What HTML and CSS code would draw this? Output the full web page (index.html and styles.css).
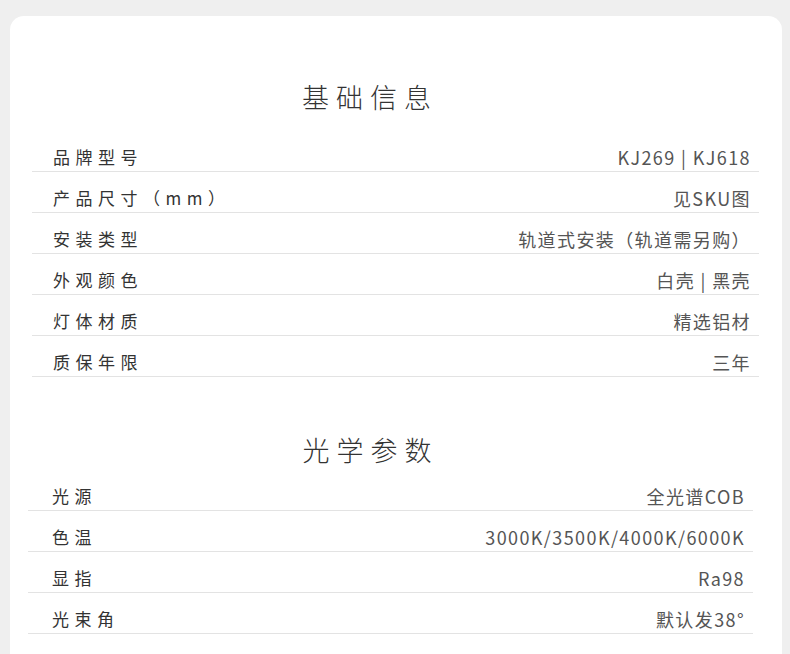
FILE: index.html
```html
<!DOCTYPE html>
<html lang="zh-CN">
<head>
  <meta charset="UTF-8">
  <meta name="viewport" content="width=device-width, initial-scale=1.0">
  <title>产品参数</title>
  <link rel="stylesheet" href="styles.css">
</head>
<body>

  <div class="card">
    <!-- 基础信息 -->
    <section class="spec spec-basic">
      <h2 class="spec-title">基础信息</h2>
      <div class="spec-row"><span class="spec-label">品牌型号</span><span class="spec-value">KJ269 | KJ618</span></div>
      <div class="spec-row"><span class="spec-label">产品尺寸（mm）</span><span class="spec-value">见SKU图</span></div>
      <div class="spec-row"><span class="spec-label">安装类型</span><span class="spec-value">轨道式安装（轨道需另购）</span></div>
      <div class="spec-row"><span class="spec-label">外观颜色</span><span class="spec-value">白壳 | 黑壳</span></div>
      <div class="spec-row"><span class="spec-label">灯体材质</span><span class="spec-value">精选铝材</span></div>
      <div class="spec-row"><span class="spec-label">质保年限</span><span class="spec-value">三年</span></div>
    </section>

    <!-- 光学参数 -->
    <section class="spec spec-optic">
      <h2 class="spec-title">光学参数</h2>
      <div class="spec-row"><span class="spec-label">光源</span><span class="spec-value">全光谱COB</span></div>
      <div class="spec-row"><span class="spec-label">色温</span><span class="spec-value">3000K/3500K/4000K/6000K</span></div>
      <div class="spec-row"><span class="spec-label">显指</span><span class="spec-value">Ra98</span></div>
      <div class="spec-row"><span class="spec-label">光束角</span><span class="spec-value">默认发38°</span></div>
    </section>
  </div>

</body>
</html>
```

FILE: styles.css
```css
body {
  margin: 0;
  padding-top: 16px;
  background-color: #efefef;
  font-family: "Noto Sans CJK SC", "Noto Sans", sans-serif;
  color: #444;
}

.card {
  margin: 0 8px 0 10px;
  padding: 61px 0 60px;
  background-color: #fff;
  border-radius: 14px 14px 0 0;
}

.spec-title {
  margin: 0 51px 0 0;
  height: 40px;
  line-height: 40px;
  text-align: center;
  font-size: 27px;
  font-weight: 300;
  letter-spacing: 7px;
  color: #333;
}

.spec-basic {
  margin: 0 23px 0 22px;
}

.spec-basic .spec-title {
  margin-bottom: 14px;
}

.spec-optic {
  margin: 53px 29px 0 18px;
}

.spec-optic .spec-title {
  margin-right: 40px;
}

.spec-row {
  display: flex;
  justify-content: space-between;
  align-items: center;
  height: 24px;
  line-height: 24px;
  padding: 14px 8px 2px 21px;
  border-bottom: 1px solid #e3e3e3;
}

.spec-optic .spec-row {
  padding-left: 24px;
  padding-right: 8px;
}

.spec-label {
  font-size: 17px;
  letter-spacing: 5.5px;
  color: #333;
}

.spec-value {
  font-size: 18px;
  letter-spacing: 1.4px;
  color: #555;
}
```
